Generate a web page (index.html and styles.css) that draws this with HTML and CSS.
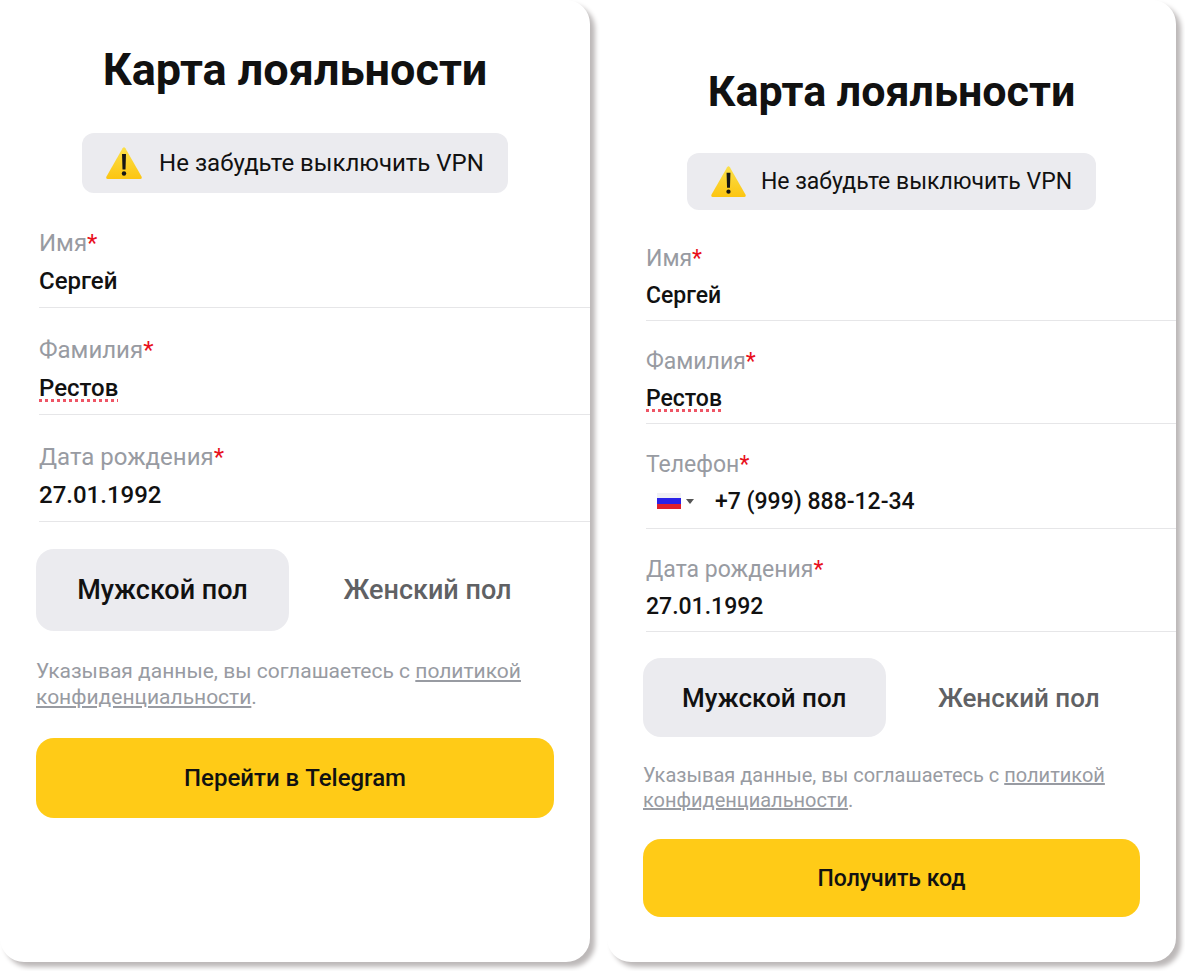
FILE: index.html
```html
<!DOCTYPE html>
<html lang="ru">
<head>
  <meta charset="utf-8">
  <meta name="viewport" content="width=device-width, initial-scale=1">
  <title>Карта лояльности</title>
  <link rel="stylesheet" href="styles.css">
</head>
<body>
  <main class="screens">
    <form class="card">
      <h1>Карта лояльности</h1>
      <div class="notice">
        <svg class="warning" viewBox="0 0 36 32" aria-hidden="true">
          <defs>
            <linearGradient id="warn1" x1="0" y1="0" x2="0" y2="1">
              <stop offset="0" stop-color="#fbe04a"/>
              <stop offset="1" stop-color="#fcc511"/>
            </linearGradient>
          </defs>
          <path d="M16.6 1.2Q18 -.8 19.4 1.2L35.5 29.5Q36.4 31.8 34.2 32H1.8Q-.4 31.8.5 29.5Z" fill="url(#warn1)"/>
          <path d="M16 7h4l-.5 15.500h-3z" fill="#151515"/>
          <circle cx="18" cy="26.500" r="2.200" fill="#151515"/>
        </svg>
        <span>Не забудьте выключить VPN</span>
      </div>

      <div class="fields">
        <div class="field">
          <label for="name1">Имя<span class="req">*</span></label>
          <input type="text" id="name1" value="Сергей">
        </div>
        <div class="field">
          <label for="surname1">Фамилия<span class="req">*</span></label>
          <input type="text" id="surname1" class="misspelled" value="Рестов">
        </div>
        <div class="field">
          <label for="birth1">Дата рождения<span class="req">*</span></label>
          <input type="text" id="birth1" value="27.01.1992">
        </div>
      </div>

      <div class="gender">
        <label><input type="radio" name="gender" checked><span>Мужской пол</span></label>
        <label><input type="radio" name="gender"><span>Женский пол</span></label>
      </div>

      <p class="policy">Указывая данные, вы соглашаетесь с <a href="#">политикой конфиденциальности</a>.</p>
      <button type="button" class="submit">Перейти в Telegram</button>
    </form>

    <form class="card card-phone">
      <h1>Карта лояльности</h1>
      <div class="notice">
        <svg class="warning" viewBox="0 0 36 32" aria-hidden="true">
          <path d="M16.6 1.2Q18 -.8 19.4 1.2L35.5 29.5Q36.4 31.8 34.2 32H1.8Q-.4 31.8.5 29.5Z" fill="url(#warn1)"/>
          <path d="M16 7h4l-.5 15.500h-3z" fill="#151515"/>
          <circle cx="18" cy="26.500" r="2.200" fill="#151515"/>
        </svg>
        <span>Не забудьте выключить VPN</span>
      </div>

      <div class="fields">
        <div class="field">
          <label for="name2">Имя<span class="req">*</span></label>
          <input type="text" id="name2" value="Сергей">
        </div>
        <div class="field">
          <label for="surname2">Фамилия<span class="req">*</span></label>
          <input type="text" id="surname2" class="misspelled" value="Рестов">
        </div>
        <div class="field">
          <label for="phone2">Телефон<span class="req">*</span></label>
          <div class="phone">
            <div class="country">
              <svg class="flag" viewBox="0 0 24 16" aria-hidden="true">
                <path d="M0 0h24v5H0z" fill="#f1f1f4"/>
                <path d="M0 5h24v6H0z" fill="#2a22e8"/>
                <path d="M0 11h24v5H0z" fill="#e0202c"/>
              </svg>
              <span class="caret"></span>
              <select aria-label="Код страны">
                <option>+7</option>
              </select>
            </div>
            <input type="tel" id="phone2" value="+7 (999) 888-12-34">
          </div>
        </div>
        <div class="field">
          <label for="birth2">Дата рождения<span class="req">*</span></label>
          <input type="text" id="birth2" value="27.01.1992">
        </div>
      </div>

      <div class="gender">
        <label><input type="radio" name="gender" checked><span>Мужской пол</span></label>
        <label><input type="radio" name="gender"><span>Женский пол</span></label>
      </div>

      <p class="policy">Указывая данные, вы соглашаетесь с <a href="#">политикой конфиденциальности</a>.</p>
      <button type="button" class="submit">Получить код</button>
    </form>
  </main>
</body>
</html>
```
FILE: styles.css
```css
* {
  box-sizing: border-box;
}
body {
  margin: 0;
  font-family: Roboto, Arial, sans-serif;
  color: #111;
  background-color: #fff;
}
.screens {
  display: grid;
  grid-template-columns: 590fr 569fr;
  gap: 17px;
  min-height: 100vh;
  padding: 0 9px 9px 0;
}
.card {
  --text: 24px;
  --label-height: 28px;
  --input-height: 48px;
  --gap: 28px;
  padding: 42px 36px 36px;
  border-radius: 24px;
  background-color: #fff;
  box-shadow: 5px 5px 5px #bcb8b8;
  font-size: var(--text);
}
.card-phone {
  --text: 23px;
  --label-height: 27px;
  --input-height: 46px;
  --gap: 27px;
  padding-top: 64px;
}
h1 {
  margin: 0 0 35px;
  font-size: 45px;
  line-height: 56px;
  font-weight: 700;
  text-align: center;
}
.card-phone h1 {
  font-size: 43px;
  line-height: 54px;
}
.notice {
  display: flex;
  align-items: center;
  gap: 17px;
  width: fit-content;
  height: 60px;
  margin: 0 auto 36px;
  padding: 0 24px;
  border-radius: 12px;
  background-color: #ebebef;
}
.card-phone .notice {
  height: 57px;
  margin-bottom: 35px;
  gap: 15px;
}
.warning {
  width: 36px;
  height: 32px;
}
.card-phone .warning {
  width: 35px;
  height: 31px;
}
/* the lines run up to the card's right edge */
.fields {
  display: flex;
  flex-direction: column;
  gap: var(--gap);
  margin: 0 -36px 27px 3px;
}
.field {
  padding-bottom: 2px;
  border-bottom: 1px solid #e6e6e8;
}
.field label {
  display: block;
  line-height: var(--label-height);
  color: #989ba2;
}
.req {
  color: #e8101c;
}
.field input {
  display: block;
  width: 100%;
  height: var(--input-height);
  padding: 0;
  border: none;
  outline: none;
  background: none;
  font: inherit;
  font-weight: 500;
  color: #111;
}
.field .misspelled {
  text-decoration: underline dotted #ee5565 3px;
  text-underline-offset: 3px;
}
.phone {
  display: flex;
  align-items: center;
  padding-bottom: 2px;
}
.country {
  position: relative;
  display: flex;
  align-items: center;
  flex: none;
  gap: 5px;
  width: 69px;
  padding-left: 11px;
}
.country select {
  position: absolute;
  inset: 0;
  width: 100%;
  opacity: 0;
}
.flag {
  width: 24px;
  height: 16px;
}
.caret {
  border: 4px solid transparent;
  border-top: 5px solid #555;
  border-bottom: none;
}
.gender {
  display: grid;
  grid-template-columns: 1fr 1fr;
  gap: 12px;
  margin-bottom: 27px;
}
.gender input {
  position: absolute;
  opacity: 0;
}
.gender span {
  display: flex;
  align-items: center;
  justify-content: center;
  height: 82px;
  border-radius: 18px;
  font-size: 27px;
  font-weight: 500;
  color: #606164;
}
.gender input:checked + span {
  background-color: #ebebef;
  color: #111;
}
.policy {
  margin: 0 0 28px;
  font-size: 21px;
  line-height: 26px;
  color: #989ba2;
}
.policy a {
  color: inherit;
}
.submit {
  display: block;
  width: 100%;
  height: 80px;
  border: none;
  border-radius: 18px;
  background-color: #ffcb17;
  font: inherit;
  font-weight: 500;
  color: #111;
  cursor: pointer;
}
.card-phone .fields,
.card-phone .gender,
.card-phone .policy {
  margin-bottom: 26px;
}
.card-phone .gender span {
  height: 79px;
  font-size: 26px;
}
.card-phone .policy {
  font-size: 20px;
  line-height: 25px;
}
.card-phone .submit {
  height: 78px;
}
```
